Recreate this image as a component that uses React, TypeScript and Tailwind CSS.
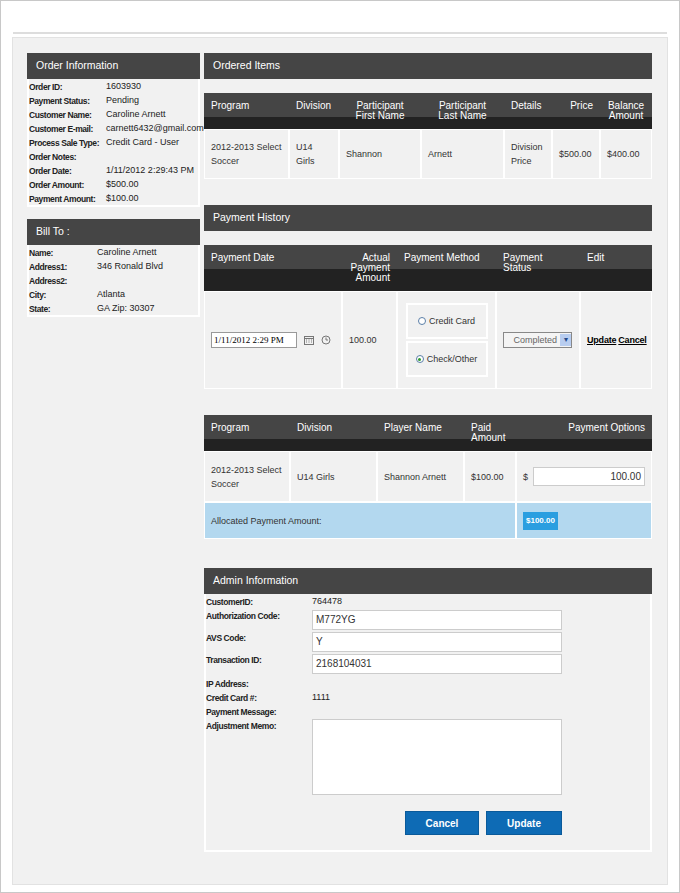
import * as React from "react";

const font = { fontFamily: '"Liberation Sans", Arial, sans-serif' };

const SectionHeader: React.FC<{title: string}> = ({title}) => (
    <div className="h-[26px] bg-[#454545] text-white text-[10.5px] flex items-center px-[9px]">{title}</div>
);

const OrderRow: React.FC<{label: string; value?: string; w?: string}> = ({label, value, w = "w-[77px]"}) => (
    <div className="flex h-[14px] items-center text-[9px] text-[#222] whitespace-nowrap">
        <div className={`${w} font-bold shrink-0 tracking-[-0.4px] text-[8.5px]`}>{label}</div>
        <div>{value}</div>
    </div>
);

const HeadCell: React.FC<{w: string; children: React.ReactNode; right?: boolean}> = ({w, children, right}) => (
    <div className={`${w} px-[7px] pt-[8px] text-[10px] leading-[10px] text-white ${right ? "text-right" : ""}`}>{children}</div>
);

const TableHead: React.FC<{h: string; children: React.ReactNode}> = ({h, children}) => (
    <div className={`${h} flex bg-[linear-gradient(#454545_0,#454545_24px,#222_24px)]`}>{children}</div>
);

const Cell: React.FC<{w: string; children?: React.ReactNode; cls?: string; blue?: boolean}> = ({w, children, cls = "", blue}) => (
    <div className={`${w} ${blue ? "bg-[#b3d8ef]" : "bg-[#f1f1f1]"} border border-white flex items-center px-[6px] text-[9px] leading-[14px] text-[#333] ${cls}`}>{children}</div>
);

export default function App() {
    return (
        <div style={font} className="w-[680px] h-[893px] border border-[#c8c8c8] bg-white relative">
            <div className="h-[33px] mx-[12px] border-b-2 border-[#ddd]" />
            <div className="mx-[11px] mt-[3px] h-[848px] bg-[#f1f1f1] border border-[#e2e2e2] flex pt-[15px] pl-[14px] gap-[4px]">
                {/* left column */}
                <div className="w-[173px] flex flex-col">
                    <SectionHeader title="Order Information" />
                    <div className="border-2 border-t-0 border-white py-[1px] h-[128px]">
                        <OrderRow label="Order ID:" value="1603930" />
                        <OrderRow label="Payment Status:" value="Pending" />
                        <OrderRow label="Customer Name:" value="Caroline Arnett" />
                        <OrderRow label="Customer E-mail:" value="carnett6432@gmail.com" />
                        <OrderRow label="Process Sale Type:" value="Credit Card - User" />
                        <OrderRow label="Order Notes:" />
                        <OrderRow label="Order Date:" value="1/11/2012 2:29:43 PM" />
                        <OrderRow label="Order Amount:" value="$500.00" />
                        <OrderRow label="Payment Amount:" value="$100.00" />
                    </div>
                    <div className="mt-[12px]"><SectionHeader title="Bill To :" /></div>
                    <div className="border-2 border-t-0 border-white py-[1px] h-[72px]">
                        <OrderRow w="w-[68px]" label="Name:" value="Caroline Arnett" />
                        <OrderRow w="w-[68px]" label="Address1:" value="346 Ronald Blvd" />
                        <OrderRow w="w-[68px]" label="Address2:" />
                        <OrderRow w="w-[68px]" label="City:" value="Atlanta" />
                        <OrderRow w="w-[68px]" label="State:" value="GA   Zip:  30307" />
                    </div>
                </div>

                {/* right column */}
                <div className="w-[448px] flex flex-col">
                    <SectionHeader title="Ordered Items" />
                    <div className="mt-[14px]">
                        <TableHead h="h-[36px]">
                            <HeadCell w="w-[85px]">Program</HeadCell>
                            <HeadCell w="w-[50px]">Division</HeadCell>
                            <HeadCell w="w-[82px]"><div className="text-center">Participant<br />First Name</div></HeadCell>
                            <HeadCell w="w-[83px]"><div className="text-center">Participant<br />Last Name</div></HeadCell>
                            <HeadCell w="w-[48px]">Details</HeadCell>
                            <HeadCell w="w-[48px]" right>Price</HeadCell>
                            <HeadCell w="w-[52px]"><div className="text-center">Balance<br />Amount</div></HeadCell>
                        </TableHead>
                        <div className="flex h-[50px]">
                            <Cell w="w-[85px]">2012-2013 Select Soccer</Cell>
                            <Cell w="w-[50px]">U14<br />Girls</Cell>
                            <Cell w="w-[82px]">Shannon</Cell>
                            <Cell w="w-[83px]">Arnett</Cell>
                            <Cell w="w-[48px]">Division Price</Cell>
                            <Cell w="w-[48px]">$500.00</Cell>
                            <Cell w="w-[52px]">$400.00</Cell>
                        </div>
                    </div>

                    <div className="mt-[26px]"><SectionHeader title="Payment History" /></div>
                    <div className="mt-[14px]">
                        <TableHead h="h-[46px]">
                            <HeadCell w="w-[138px]">Payment Date</HeadCell>
                            <HeadCell w="w-[55px]" right>Actual<br />Payment<br />Amount</HeadCell>
                            <HeadCell w="w-[99px]">Payment Method</HeadCell>
                            <HeadCell w="w-[84px]">Payment<br />Status</HeadCell>
                            <HeadCell w="w-[72px]">Edit</HeadCell>
                        </TableHead>
                        <div className="flex h-[98px]">
                            <Cell w="w-[138px]" cls="gap-[5px]">
                                <div className="w-[86px] h-[16px] bg-white border border-[#999] text-[9px] text-black flex items-center px-[2px]" style={{fontFamily: '"Liberation Serif", serif'}}>1/11/2012 2:29 PM</div>
                                <svg width="10" height="10" viewBox="0 0 10 10" className="ml-[2px]"><rect x="0.5" y="1.5" width="9" height="8" fill="none" stroke="#777" /><path d="M0.5 3.5h9M2 5h1M4.5 5h1M7 5h1M2 7h1M4.5 7h1M7 7h1" stroke="#777" /></svg>
                                <svg width="10" height="10" viewBox="0 0 10 10" className="ml-[2px]"><circle cx="5" cy="5" r="4" fill="none" stroke="#777" /><path d="M5 2.5V5h2" fill="none" stroke="#777" /></svg>
                            </Cell>
                            <Cell w="w-[55px]">100.00</Cell>
                            <Cell w="w-[99px]" cls="flex-col justify-center gap-[2px]">
                                <div className="w-[82px] h-[36px] border-2 border-white flex items-center justify-center gap-[3px]">
                                    <span className="w-[8px] h-[8px] rounded-full border border-[#5b7fa8] bg-white" />Credit Card
                                </div>
                                <div className="w-[82px] h-[36px] border-2 border-white flex items-center justify-center gap-[3px]">
                                    <span className="w-[8px] h-[8px] rounded-full border border-[#5b7fa8] bg-white flex items-center justify-center"><span className="w-[3px] h-[3px] rounded-full bg-[#2a9a2a]" /></span>Check/Other
                                </div>
                            </Cell>
                            <Cell w="w-[84px]">
                                <div className="w-[69px] h-[16px] border border-[#888] bg-[#f4f4f4] flex items-center justify-end text-[#666] text-[9px]">
                                    <span className="mr-[3px]">Completed</span>
                                    <span className="w-[11px] h-[12px] bg-[#b8cdf0] flex items-center justify-center text-[#254a8a] text-[8px]">▾</span>
                                </div>
                            </Cell>
                            <Cell w="w-[72px]" cls="font-bold text-black text-[8px] gap-[2px] tracking-[-0.2px]"><span className="underline">Update</span><span className="underline">Cancel</span></Cell>
                        </div>
                    </div>

                    <div className="mt-[26px]">
                        <TableHead h="h-[36px]">
                            <HeadCell w="w-[86px]">Program</HeadCell>
                            <HeadCell w="w-[87px]">Division</HeadCell>
                            <HeadCell w="w-[87px]">Player Name</HeadCell>
                            <HeadCell w="w-[52px]">Paid<br />Amount</HeadCell>
                            <HeadCell w="w-[136px]" right>Payment Options</HeadCell>
                        </TableHead>
                        <div className="flex h-[51px]">
                            <Cell w="w-[86px]">2012-2013 Select Soccer</Cell>
                            <Cell w="w-[87px]">U14 Girls</Cell>
                            <Cell w="w-[87px]">Shannon Arnett</Cell>
                            <Cell w="w-[52px]">$100.00</Cell>
                            <Cell w="w-[136px]" cls="gap-[5px]">$<div className="flex-1 h-[19px] bg-white border border-[#ccc] text-right pr-[3px] text-[10px] leading-[17px]">100.00</div></Cell>
                        </div>
                        <div className="flex h-[37px]">
                            <Cell w="w-[312px]" blue cls="text-[8px]">Allocated Payment Amount:</Cell>
                            <Cell w="w-[136px]" blue><span className="bg-[#2a9ee0] text-white font-bold text-[8px] px-[3px] py-[2px]">$100.00</span></Cell>
                        </div>
                    </div>

                    <div className="mt-[29px]"><SectionHeader title="Admin Information" /></div>
                    <div className="border-2 border-t-0 border-white h-[258px] text-[9px] text-[#222]">
                        <div className="flex h-[14px] items-center mt-[1px]"><div className="w-[106px] font-bold tracking-[-0.4px] text-[8.5px]">CustomerID:</div><div>764478</div></div>
                        {[["Authorization Code:", "M772YG"], ["AVS Code:", "Y"], ["Transaction ID:", "2168104031"]].map(([l, v]) => (
                            <div key={l} className="flex h-[22px] pt-[1px]">
                                <div className="w-[106px] font-bold tracking-[-0.4px] text-[8.5px]">{l}</div>
                                <div className="w-[250px] h-[20px] bg-white border border-[#ccc] text-[10px] text-[#333] px-[3px] leading-[18px]">{v}</div>
                            </div>
                        ))}
                        <div className="flex h-[14px] items-center mt-[2px]"><div className="w-[106px] font-bold tracking-[-0.4px] text-[8.5px]">IP Address:</div></div>
                        <div className="flex h-[14px] items-center"><div className="w-[106px] font-bold tracking-[-0.4px] text-[8.5px]">Credit Card #:</div><div>1111</div></div>
                        <div className="flex h-[14px] items-center"><div className="w-[106px] font-bold tracking-[-0.4px] text-[8.5px]">Payment Message:</div></div>
                        <div className="flex">
                            <div className="w-[106px] font-bold pt-[1px] tracking-[-0.4px] text-[8.5px]">Adjustment Memo:</div>
                            <div className="w-[250px] h-[76px] bg-white border border-[#ccc]" />
                        </div>
                        <div className="flex justify-end gap-[7px] w-[356px] mt-[16px]">
                            <button className="w-[74px] h-[24px] bg-[#0e6bb5] border border-[#0a5a9a] text-white font-bold text-[10px]">Cancel</button>
                            <button className="w-[76px] h-[24px] bg-[#0e6bb5] border border-[#0a5a9a] text-white font-bold text-[10px]">Update</button>
                        </div>
                    </div>
                </div>
            </div>
        </div>
    );
}
